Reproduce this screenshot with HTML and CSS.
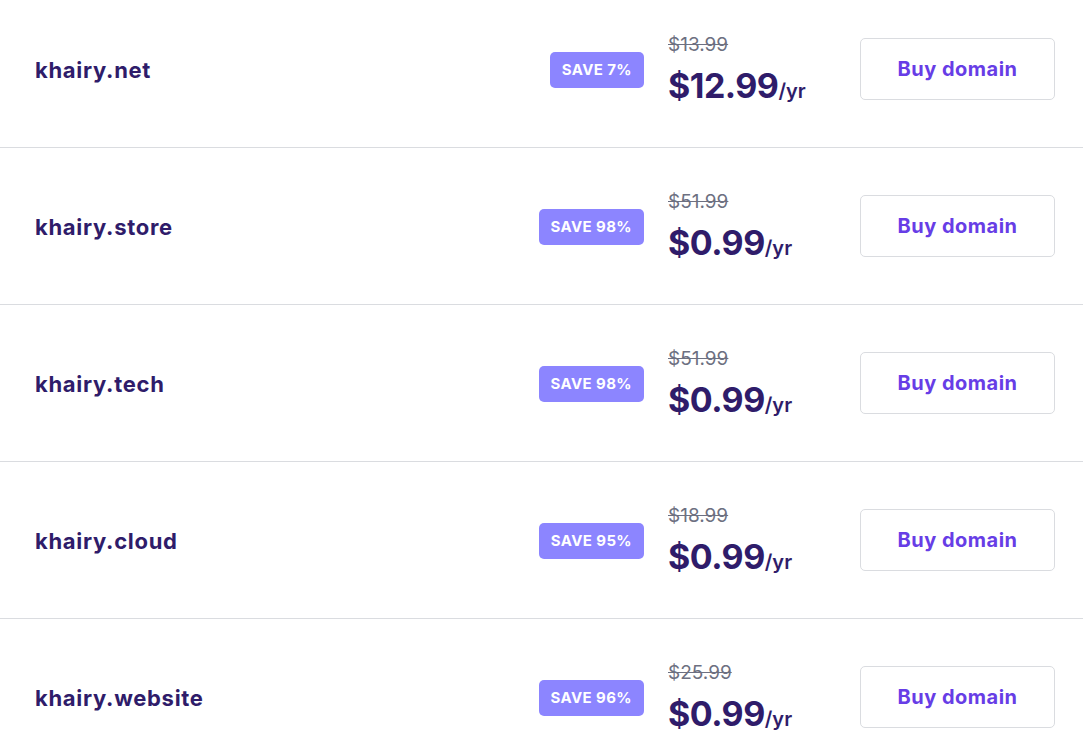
FILE: index.html
```html
<!DOCTYPE html>
<html>
<head>
<meta charset="utf-8">
<link rel="stylesheet" href="styles.css">
</head>
<body>
<div class="list">
  <div class="row">
    <div class="domain">khairy.net</div>
    <span class="badge">SAVE 7%</span>
    <div class="price"><div class="old">$13.99</div><div class="new">$12.99<span class="per">/yr</span></div></div>
    <button class="buy">Buy domain</button>
  </div>
  <div class="row">
    <div class="domain">khairy.store</div>
    <span class="badge">SAVE 98%</span>
    <div class="price"><div class="old">$51.99</div><div class="new">$0.99<span class="per">/yr</span></div></div>
    <button class="buy">Buy domain</button>
  </div>
  <div class="row">
    <div class="domain">khairy.tech</div>
    <span class="badge">SAVE 98%</span>
    <div class="price"><div class="old">$51.99</div><div class="new">$0.99<span class="per">/yr</span></div></div>
    <button class="buy">Buy domain</button>
  </div>
  <div class="row">
    <div class="domain">khairy.cloud</div>
    <span class="badge">SAVE 95%</span>
    <div class="price"><div class="old">$18.99</div><div class="new">$0.99<span class="per">/yr</span></div></div>
    <button class="buy">Buy domain</button>
  </div>
  <div class="row">
    <div class="domain">khairy.website</div>
    <span class="badge">SAVE 96%</span>
    <div class="price"><div class="old">$25.99</div><div class="new">$0.99<span class="per">/yr</span></div></div>
    <button class="buy">Buy domain</button>
  </div>
</div>
</body>
</html>
```
FILE: styles.css
```css
html, body {
  margin: 0;
  padding: 0;
  background: #fff;
  font-family: "Inter", "DejaVu Sans", sans-serif;
  overflow: hidden;
}
.list {
  margin-top: -9px;
}
.row {
  height: 156px;
  box-sizing: content-box;
  display: flex;
  align-items: center;
  padding: 0 28px 0 35px;
  border-bottom: 1px solid #dadce0;
}
.domain {
  flex: 1;
  font-size: 22px;
  font-weight: 700;
  color: #2f1c6a;
  letter-spacing: 0.7px;
  padding-top: 2px;
}
.badge {
  background: #8c85ff;
  color: #fff;
  font-size: 15px;
  font-weight: 700;
  letter-spacing: 0.4px;
  height: 36px;
  line-height: 36px;
  padding: 0 12px;
  border-radius: 5px;
  margin-right: 24px;
  margin-top: 2px;
}
.price {
  width: 168px;
  margin-right: 24px;
  padding-top: 7px;
  display: flex;
  flex-direction: column;
}
.old {
  font-size: 19px;
  color: #6d7081;
  text-decoration: line-through;
  line-height: 24px;
}
.new {
  font-size: 34px;
  font-weight: 700;
  color: #2f1c6a;
  line-height: 44px;
  letter-spacing: -0.5px;
  margin-top: 7px;
}
.per {
  font-size: 20px;
  font-weight: 600;
  letter-spacing: 0;
}
.buy {
  width: 195px;
  height: 62px;
  background: #fff;
  border: 1px solid #dadce0;
  border-radius: 5px;
  color: #673de6;
  font-family: inherit;
  font-size: 20px;
  font-weight: 700;
  letter-spacing: 0.5px;
}
```
